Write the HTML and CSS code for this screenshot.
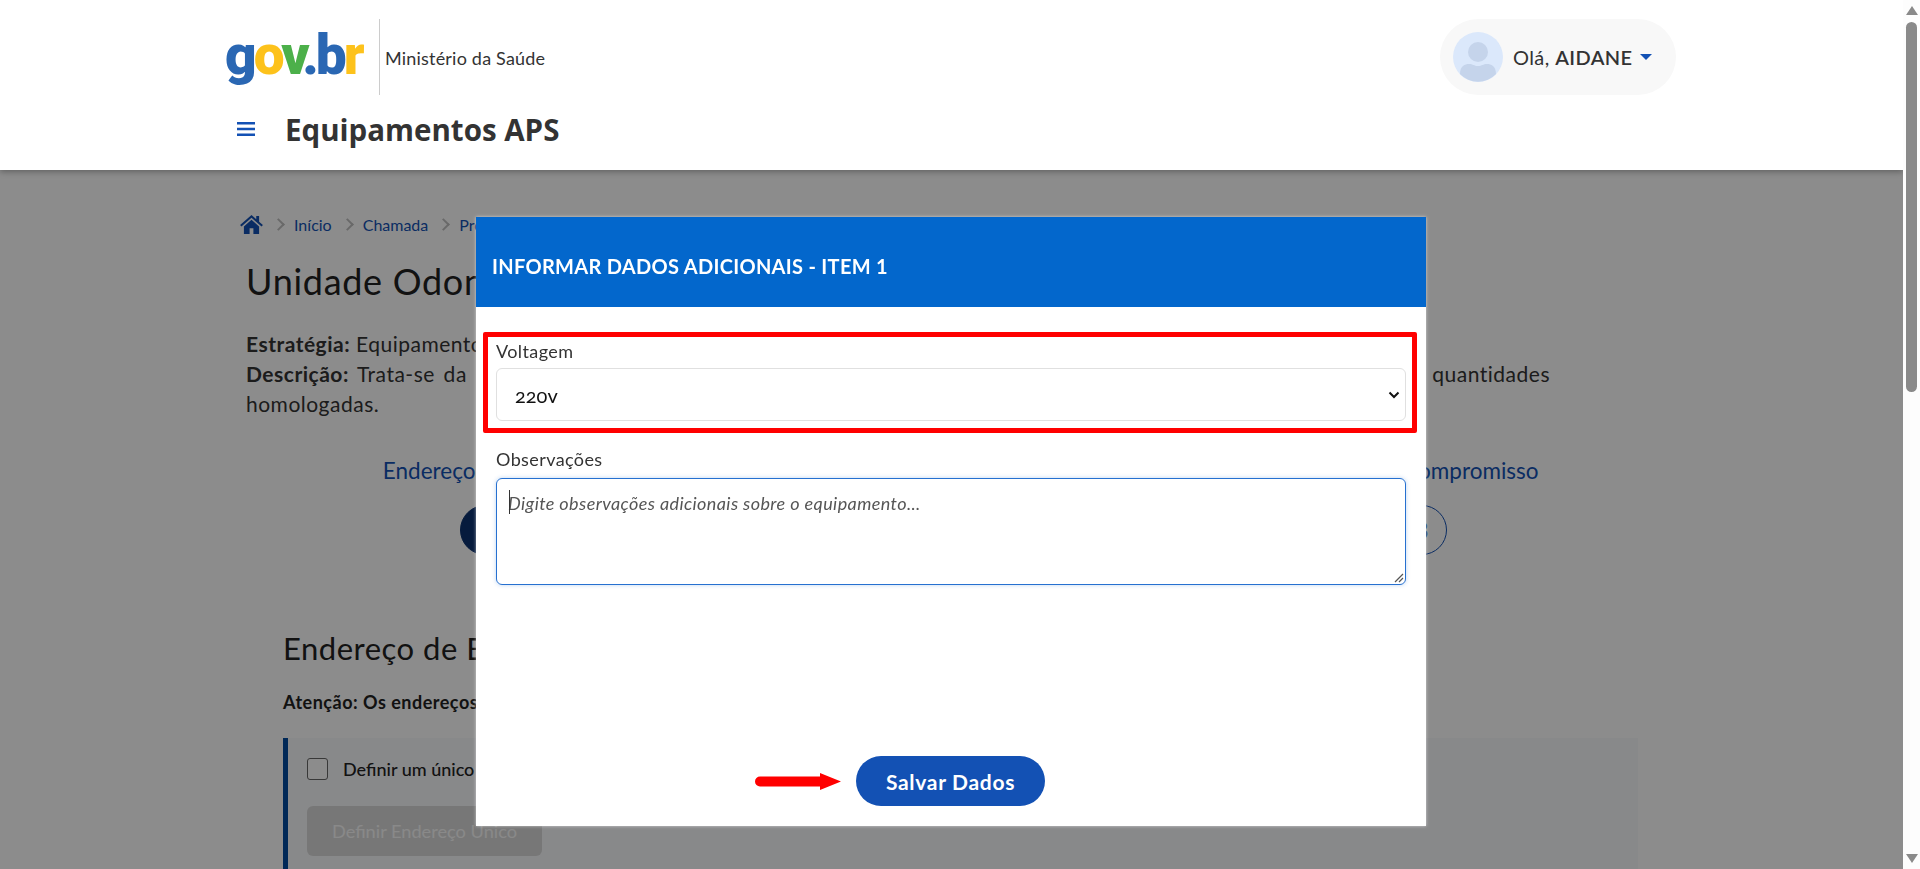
FILE: index.html
```html
<!DOCTYPE html>
<html lang="pt-BR">
<head>
<meta charset="utf-8">
<title>Equipamentos APS</title>
<link rel="stylesheet" href="styles.css">
</head>
<body>
<div class="page">
  <header class="header">
    <div class="header-inner">
      <div class="header-top">
        <div class="brand">
          <span class="logo"><span class="lg-b">g</span><span class="lg-y">o</span><span class="lg-g">v</span><span class="lg-b">.b</span><span class="lg-y">r</span></span>
          <span class="brand-sep"></span>
          <span class="brand-name">Ministério da Saúde</span>
        </div>
        <div class="user">
          <svg class="avatar" viewBox="0 0 50 50"><circle cx="25" cy="25" r="25" fill="#dbe8fb"/><circle cx="25" cy="20" r="10" fill="#c5d4eb"/><path d="M7 42c0-8 5-10 9-10 4 0 5 2 9 2s5-2 9-2c4 0 9 2 9 10a25 25 0 0 1-36 0z" fill="#c5d4eb"/></svg>
          <span class="user-text">Olá, <b>AIDANE</b></span>
          <span class="caret"></span>
        </div>
      </div>
      <div class="header-bottom">
        <svg class="menu" viewBox="0 0 18 14"><path d="M0 0h18v2.400H0zM0 5.800h18v2.400H0zM0 11.600h18V14H0z" fill="#1351b4"/></svg>
        <h1 class="app-title">Equipamentos APS</h1>
      </div>
    </div>
  </header>

  <main class="content">
    <nav class="crumbs">
      <svg class="home" viewBox="0 0 24 20"><path d="M12 0 0 10.500l1.400 1.500L12 3l10.600 9 1.400-1.500L20 7V1h-3v3.400zM4 12v8h6v-6h4v6h6v-8l-8-7z" fill="#1351b4"/></svg>
      <span class="chev"></span><a>Início</a>
      <span class="chev"></span><a>Chamada</a>
      <span class="chev"></span><a>Processo</a>
    </nav>
    <h2 class="page-title">Unidade Odontológica Móvel</h2>
    <p class="desc"><b>Estratégia:</b> Equipamentos para atenção primária à saúde<br><span class="desc-line"><b>Descrição:</b> Trata-se da indicação dos equipamentos e das respectivas informações adicionais do item, considerando as quantidades</span>homologadas.</p>
    <div class="steps">
      <div class="step"><span class="step-label">Endereço de Entrega</span><span class="step-dot done">1</span></div>
      <div class="step"><span class="step-label">Equipamentos</span><span class="step-dot">2</span></div>
      <div class="step"><span class="step-label">Termo de Compromisso</span><span class="step-dot">3</span></div>
    </div>
    <section class="section">
      <h3 class="section-title">Endereço de Entrega</h3>
      <p class="attention">Atenção: Os endereços informados serão utilizados na entrega</p>
      <div class="panel">
        <label class="check"><span class="box"></span>Definir um único endereço</label>
        <span class="disabled-btn">Definir Endereço Único</span>
      </div>
    </section>
  </main>
</div>

<div class="overlay"></div>

<div class="modal">
  <div class="modal-head">INFORMAR DADOS ADICIONAIS - ITEM 1</div>
  <div class="modal-body">
    <div class="highlight">
      <div class="field">
        <span class="label label-top">Voltagem</span>
        <div class="select"><span class="select-value">220v</span><svg class="select-chev" viewBox="0 0 12 8"><path d="M1.500 1.500 6 6l4.500-4.500" fill="none" stroke="#111" stroke-width="2"/></svg></div>
      </div>
    </div>
    <div class="field obs">
      <span class="label">Observações</span>
      <div class="textarea"><span class="cursor"></span><span class="placeholder">Digite observações adicionais sobre o equipamento...</span>
        <svg class="grip" viewBox="0 0 10 10"><path d="M1 9 9 1M5 9l4-4" stroke="#555" stroke-width="1.200" fill="none"/></svg>
      </div>
    </div>
    <div class="modal-foot">
      <svg class="arrow" viewBox="0 0 86 17"><path d="M5 3.500h60V0l21 8.500L65 17v-3.500H5a5 5 0 0 1 0-10z" fill="#f00"/></svg>
      <span class="save">Salvar Dados</span>
    </div>
  </div>
</div>

<div class="scrollbar">
  <span class="sb-up"></span>
  <span class="sb-thumb"></span>
  <span class="sb-down"></span>
</div>
</body>
</html>
```
FILE: styles.css
```css
* { box-sizing: border-box; }
html, body { margin: 0; height: 100%; overflow: hidden; }
body { font-family: "Lato", "Open Sans", sans-serif; color: #333; background: #fff; }
.page { width: 1903px; height: 869px; overflow: hidden; }
.header { height: 170px; background: #fff; box-shadow: 0 2px 6px rgba(0,0,0,.3); position: relative; }
.header-inner { width: 1451px; margin-left: 225px; }
.header-top { display: flex; justify-content: space-between; align-items: center; height: 95px; padding-top: 19px; }
.brand { display: flex; align-items: center; }
.logo { font-family: "Roboto", sans-serif; font-weight: 900; font-size: 55px; letter-spacing: -3px; line-height: 72px; padding-bottom: 4px; width: 154px; white-space: nowrap; }
.lg-b { color: #2a67b3; } .lg-y { color: #fdc21b; } .lg-g { color: #4cb04a; }
.brand-sep { width: 1px; height: 76px; background: #ccc; margin-right: 5px; }
.brand-name { font-size: 18px; color: #333; letter-spacing: .2px; margin-top: 2px; }
.user { display: flex; align-items: center; width: 236px; height: 76px; background: #f8f8f8; border-radius: 38px; padding-left: 13px; }
.avatar { width: 50px; height: 50px; }
.user-text { font-size: 20px; margin-left: 10px; color: #333; letter-spacing: .4px; white-space: nowrap; }
.user-text b { font-weight: 600; }
.caret { width: 0; height: 0; border-left: 6px solid transparent; border-right: 6px solid transparent; border-top: 6.500px solid #1351b4; margin-left: 8px; }
.header-bottom { display: flex; align-items: center; height: 50px; margin-top: 9px; padding-left: 12px; }
.menu { width: 18px; height: 14px; }
.app-title { font-family: "Open Sans", sans-serif; font-size: 29.500px; font-weight: 700; margin: 0 0 0 30px; color: #333; }
.content { width: 1452px; margin-left: 240px; }
.crumbs { display: flex; align-items: center; height: 24px; margin-top: 42px; font-size: 16px; }
.home { width: 23px; height: 19px; }
.chev { width: 9px; height: 9px; border-top: 2px solid #c0c0c0; border-right: 2px solid #c0c0c0; transform: rotate(45deg); margin: 0 11px; }
.crumbs a { color: #1351b4; }
.page-title { font-size: 36px; font-weight: 400; margin: 21px 0 0 6px; line-height: 48px; color: #222; letter-spacing: .7px; white-space: nowrap; }
.desc { font-size: 21px; line-height: 30px; margin: 24px 0 0 6px; color: #333; width: 1304px; letter-spacing: .5px; }
.desc-line { display: block; text-align: justify; text-align-last: justify; }
.steps { display: flex; justify-content: space-between; margin: 38px 0 0 125px; width: 1177px; }
.step { display: flex; flex-direction: column; align-items: center; gap: 20px; width: 240px; }
.step-label { font-size: 22.500px; color: #1351b4; line-height: 28px; white-space: nowrap; }
.step-dot { width: 50px; height: 50px; border-radius: 50%; border: 1px solid #1351b4; color: #1351b4; display: flex; align-items: center; justify-content: center; font-weight: 700; font-size: 22px; }
.step-dot.done { background: #0c326f; border-color: #0c326f; color: #fff; }
.section { margin: 73px 0 0 43px; }
.section-title { font-size: 31px; font-weight: 400; margin: 0; line-height: 40px; letter-spacing: .5px; color: #222; }
.attention { font-size: 18px; font-weight: 700; margin: 22px 0 0; line-height: 24px; color: #222; letter-spacing: .5px; white-space: nowrap; }
.panel { margin-top: 24px; width: 1355px; height: 200px; background: #f8f9fc; border-left: 5px solid #004a9f; padding: 20px 0 0 19px; }
.check { display: flex; align-items: center; font-size: 18px; font-weight: 500; color: #222; height: 22px; }
.box { width: 21px; height: 22px; border: 1px solid #666; border-radius: 3px; background: #fff; margin-right: 15px; }
.disabled-btn { display: flex; align-items: center; justify-content: center; width: 235px; height: 50px; margin-top: 26px; background: #d9d9d9; border-radius: 6px; color: #fafafa; font-size: 18.200px; white-space: nowrap; }
.overlay { position: fixed; inset: 170px 17px 0 0; background: rgba(0,0,0,.45); }
.modal { position: fixed; left: 476px; top: 217px; width: 950px; height: 609px; background: #fff; box-shadow: 0 0 3px rgba(255,255,255,.6); }
.modal-head { height: 90px; background: #0367cc; color: #fff; font-weight: 700; font-size: 20px; display: flex; align-items: center; padding: 8px 0 0 16px; letter-spacing: .3px; }
.modal-body { padding: 25px 0 0 7px; }
.highlight { width: 934px; height: 101px; border: 5px solid #f00; border-radius: 2px; padding-left: 8px; }
.label { display: block; font-size: 18px; line-height: 26px; color: #333; margin-top: 3px; letter-spacing: .4px; }
.label-top { margin-top: 1px; }
.select { width: 910px; height: 53px; margin-top: 4px; border: 1px solid #e0e0e0; border-radius: 6px; display: flex; align-items: center; justify-content: space-between; padding: 0 5px 0 18px; font-size: 20px; color: #111; }
.select-value { font-variant-numeric: oldstyle-nums; }
.select-chev { width: 12px; height: 8px; }
.obs { margin: 13px 0 0 13px; }
.textarea { position: relative; width: 910px; height: 107px; margin-top: 6px; border: 1.500px solid #2670d0; border-radius: 6px; padding: 13px 11px; font-size: 18px; box-shadow: 0 0 4px rgba(38,112,208,.3); letter-spacing: .4px; }
.placeholder { font-style: italic; color: #555; }
.cursor { position: absolute; left: 12px; top: 11px; width: 1px; height: 24px; background: #333; }
.grip { position: absolute; right: 1px; bottom: 1px; width: 10px; height: 10px; }
.modal-foot { display: flex; align-items: center; margin-top: 171px; padding-left: 272px; }
.arrow { width: 86px; height: 17px; }
.save { display: flex; align-items: center; justify-content: center; width: 189px; height: 50px; margin-left: 15px; background: #1351b4; border-radius: 25px; color: #fff; font-weight: 700; font-size: 21px; letter-spacing: .7px; }
.scrollbar { position: fixed; top: 0; right: 0; bottom: 0; width: 17px; background: #fdfdfd; display: flex; flex-direction: column; align-items: center; }
.sb-up { width: 0; height: 0; border-left: 6px solid transparent; border-right: 6px solid transparent; border-bottom: 9px solid #8a8a8a; margin-top: 6px; }
.sb-thumb { width: 11px; height: 370px; margin-top: 7px; border-radius: 6px; background: #8a8a8a; }
.sb-down { width: 0; height: 0; border-left: 6px solid transparent; border-right: 6px solid transparent; border-top: 9px solid #8a8a8a; margin-top: auto; margin-bottom: 6px; }
```
